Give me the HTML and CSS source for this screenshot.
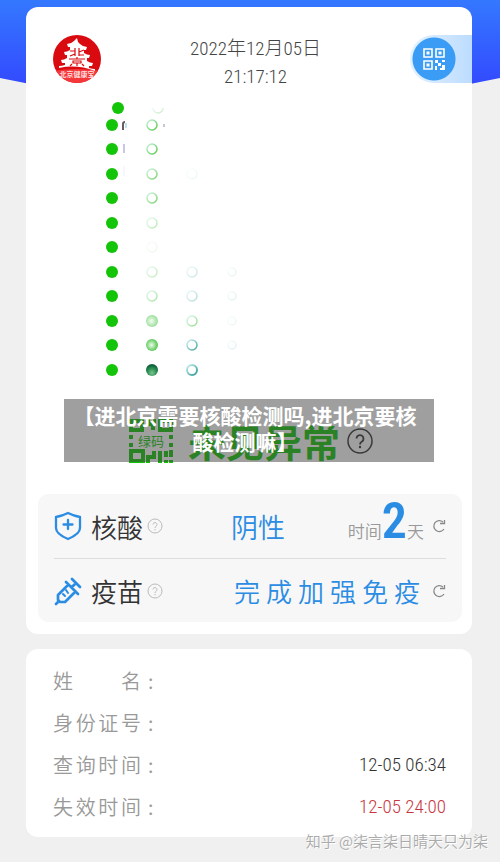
FILE: index.html
```
<!DOCTYPE html>
<html lang="zh-CN">

<head>
    <meta charset="UTF-8">
    <meta name="viewport" content="width=device-width, initial-scale=1.0">
    <title>北京健康宝</title>
    <link rel="stylesheet" href="styles.css">
</head>

<body>
    <div class="sky"></div>
    <main class="page">
        <section class="card">
            <header class="top">
                <svg class="logo" viewBox="0 0 48 48" role="img" aria-label="北京健康宝">
                    <defs>
                        <clipPath id="round"><circle cx="24" cy="24" r="24" /></clipPath>
                    </defs>
                    <g clip-path="url(#round)">
                        <rect width="48" height="48" fill="#d90b10" />
                        <path d="M0 36Q24 32 48 36V48H0Z" fill="#f4373a" />
                    </g>
                    <path d="M24 3l1 4 2 2q3 3 7 3l-1 3h-2v3q3 2 6 2l-1 3h-2v3q3 2 6 2l-1 3h-3v2q3 1 6 1v2Q24 29 6 33v-2q3 0 6-1v-2H9l-1-3q3 0 6-2v-3h-2l-1-3q3 0 6-2v-3h-2l-1-3q4 0 7-3l2-2z" fill="#fff" />
                    <path d="M22 13v8M22 16h-5M22 19l-5 2M26 13v8M31 15l-5 2M26 20h5M24 22v2M16 24h16M20 26h8v2h-8zM24 28v3M19 29l-2 2M29 29l2 2" fill="none" stroke="#d90b10" stroke-width="1.200" />
                    <text x="24" y="42" text-anchor="middle" class="logo-text">北京健康宝</text>
                </svg>
                <div class="clock">
                    <div>2022年12月05日</div>
                    <div>21:17:12</div>
                </div>
                <button class="scan" type="button" aria-label="扫码">
                    <svg viewBox="0 0 22 22">
                        <g fill="none" stroke="#fff" stroke-width="1.600">
                            <path d="M1 1h8v8H1zM13 1h8v8h-8zM1 13h8v8H1z" />
                        </g>
                        <path d="M3.500 3.500h3v3h-3zM15.500 3.500h3v3h-3zM3.500 15.500h3v3h-3zM12 12h3v3h-3zM15 15h3v3h-3zM19 12h3v2h-3zM12 18h2v4h-2zM19 17h3v5h-5v-2h2z" fill="#fff" />
                    </svg>
                </button>
            </header>

            <svg class="dots" viewBox="0 0 260 282" aria-hidden="true">
                <defs>
                    <linearGradient id="ring" x1="0" y1="0" x2="1" y2="1">
                        <stop offset="0" stop-color="#c8f2df" />
                        <stop offset="1" stop-color="#52c945" />
                    </linearGradient>
                    <linearGradient id="ring2" x1="0" y1="0" x2="1" y2="1">
                        <stop offset="0" stop-color="#c8eef2" />
                        <stop offset="1" stop-color="#2b9a91" />
                    </linearGradient>
                    <radialGradient id="ball" cx=".5" cy=".75" r=".7">
                        <stop offset="0" stop-color="#7cc592" />
                        <stop offset=".6" stop-color="#258a4d" />
                        <stop offset="1" stop-color="#0c5a38" />
                    </radialGradient>
                    <radialGradient id="glow" cx=".45" cy=".5" r=".5">
                        <stop offset="0" stop-color="#eefce8" />
                        <stop offset="1" stop-color="#5cc95c" />
                    </radialGradient>
                </defs>
                <g fill="#14c408">
                    <circle cx="14" cy="14" r="6" />
                    <circle cx="8" cy="31" r="6" />
                    <circle cx="8" cy="55" r="6" />
                    <circle cx="8" cy="80" r="6" />
                    <circle cx="8" cy="104" r="6" />
                    <circle cx="8" cy="129" r="6" />
                    <circle cx="8" cy="153" r="6" />
                    <circle cx="8" cy="178" r="6" />
                    <circle cx="8" cy="202" r="6" />
                    <circle cx="8" cy="227" r="6" />
                    <circle cx="8" cy="251" r="6" />
                    <circle cx="8" cy="276" r="6" />
                </g>
                <path d="M19 36V30q0-2 2-2" fill="none" stroke="#6b5a60" stroke-width="2" />
                <path d="M22 34v-5" stroke="#bfe3ea" stroke-width="2" />
                <path d="M60 33v-3" stroke="#8a8ea8" />
                <path d="M20 59v-9" stroke="#c9c6e6" stroke-width="2" />
                <path d="M20 82v-10" stroke="#eeeefa" />
                <g fill="none" stroke="url(#ring)" stroke-width="1.500">
                    <path d="M49 14a5 5 0 0 0 10 0" opacity=".3" />
                    <circle cx="48" cy="31" r="5" />
                    <circle cx="48" cy="55" r="5" />
                    <circle cx="48" cy="80" r="5" opacity=".8" />
                    <circle cx="48" cy="104" r="5" opacity=".8" />
                    <circle cx="48" cy="129" r="5" opacity=".4" />
                    <circle cx="48" cy="153" r="5" opacity=".1" />
                    <circle cx="48" cy="178" r="5" opacity=".35" />
                    <circle cx="48" cy="202" r="5" opacity=".5" />
                </g>
                <circle cx="48" cy="227" r="6" fill="url(#glow)" opacity=".6" />
                <circle cx="48" cy="251" r="6" fill="url(#glow)" />
                <circle cx="48" cy="276" r="6" fill="url(#ball)" />
                <g fill="none" stroke="url(#ring2)" stroke-width="1.500">
                    <circle cx="88" cy="80" r="5" opacity=".08" />
                    <circle cx="88" cy="178" r="5" opacity=".25" />
                    <circle cx="88" cy="202" r="5" opacity=".35" />
                    <circle cx="88" cy="227" r="5" opacity=".6" stroke="url(#ring)" />
                    <circle cx="88" cy="251" r="5" opacity=".9" />
                    <circle cx="88" cy="276" r="5" stroke-width="2" />
                    <circle cx="128" cy="178" r="4" opacity=".12" />
                    <circle cx="128" cy="202" r="4" opacity=".15" />
                    <circle cx="128" cy="227" r="4" opacity=".1" />
                    <circle cx="128" cy="251" r="4" opacity=".15" />
                </g>
            </svg>

            <div class="result">
                <div class="state">
                    <svg class="code" viewBox="0 0 46 46">
                        <path d="M3 3h11v9H3zM32 3h11v9H32zM3 33h12v10H3zM20 1v5h5v6M20 45v-6h6v-6M32 33v12M38 33v6M43 32v7M38 45v-3M43 45v-3" fill="none" stroke="#14c408" stroke-width="4" />
                        <path d="M1 17h4v4H1zM1 25h4v4H1zM41 17h4v4h-4zM41 25h4v4h-4zM25 1h3v4h-3z" fill="#14c408" />
                        <text x="23" y="28" text-anchor="middle" class="code-text">绿码</text>
                    </svg>
                    <strong>未见异常</strong>
                    <svg class="ask" viewBox="0 0 26 26">
                        <circle cx="13" cy="13" r="12" fill="none" stroke="#333" stroke-width="1.500" />
                        <path d="M9.500 10.500a3.500 3.500 0 1 1 5.500 3q-2 1-2 3" fill="none" stroke="#333" stroke-width="1.800" />
                        <circle cx="13" cy="19" r="1.200" fill="#333" />
                    </svg>
                </div>
                <h1 class="banner">【进北京需要核酸检测吗,进北京要核酸检测嘛】</h1>
            </div>

            <div class="panel">
                <div class="row">
                    <svg class="icon" viewBox="0 0 28 30">
                        <path d="M14 2q6 3 12 4v11q0 6-12 11Q2 23 2 17V6q6-1 12-4zM14 9v9M9.500 13.500h9" fill="none" stroke="#2b8ce3" stroke-width="2.300" stroke-linejoin="round" stroke-linecap="round" />
                    </svg>
                    <span class="name">核酸</span>
                    <svg class="help" viewBox="0 0 16 16">
                        <circle cx="8" cy="8" r="7" />
                        <path d="M6 6.500a2 2 0 1 1 3 1.800q-1 .500-1 1.700M8 11v1.300" />
                    </svg>
                    <span class="value negative">阴性</span>
                    <span class="days">时间<b>2</b>天</span>
                    <button class="reload" type="button" aria-label="刷新">
                        <svg viewBox="0 0 14 14">
                            <path d="M11 3A5.500 5.500 0 1 0 12 10M8 4.500h4.500V1" />
                        </svg>
                    </button>
                </div>
                <div class="row">
                    <svg class="icon" viewBox="0 0 28 30">
                        <g fill="none" stroke="#2b8ce3" stroke-width="2.700" stroke-linecap="round" stroke-linejoin="round">
                            <path d="M12 6l12 12M14 9L4 19v5l2 2h5l10-10M2 28l3-3M18 11l4-4M18 3l8 8" />
                            <path d="M12 14l2 3M9 18l2 2" stroke-width="2" />
                        </g>
                    </svg>
                    <span class="name">疫苗</span>
                    <svg class="help" viewBox="0 0 16 16">
                        <circle cx="8" cy="8" r="7" />
                        <path d="M6 6.500a2 2 0 1 1 3 1.800q-1 .500-1 1.700M8 11v1.300" />
                    </svg>
                    <span class="value booster">完成加强免疫</span>
                    <button class="reload" type="button" aria-label="刷新">
                        <svg viewBox="0 0 14 14">
                            <path d="M11 3A5.500 5.500 0 1 0 12 10M8 4.500h4.500V1" />
                        </svg>
                    </button>
                </div>
            </div>
        </section>

        <dl class="card info">
            <div class="line">
                <dt><span>姓名</span>:</dt>
                <dd></dd>
            </div>
            <div class="line">
                <dt><span>身份证号</span>:</dt>
                <dd></dd>
            </div>
            <div class="line">
                <dt><span>查询时间</span>:</dt>
                <dd>12-05 06:34</dd>
            </div>
            <div class="line">
                <dt><span>失效时间</span>:</dt>
                <dd class="expired">12-05 24:00</dd>
            </div>
        </dl>
        <div class="watermark">知乎 @柒言柒日晴天只为柒</div>
    </main>
</body>

</html>
```
FILE: styles.css
```
* {
    box-sizing: border-box;
}

body {
    margin: 0;
    background-color: #f0f0f0;
    font-family: "Noto Sans CJK SC", sans-serif;
    font-weight: 350;
    color: #333;
}

.sky {
    position: absolute;
    top: 0;
    left: 0;
    width: 100%;
    height: 96px;
    background: linear-gradient(#3478ff, #3344ff);
    clip-path: polygon(0 0, 100% 0, 100% 78px, 90% 88px, 10% 88px, 0 78px);
}

.page {
    position: relative;
    padding: 7px 28px 25px 26px;
}

.card {
    background-color: white;
    border-radius: 12px;
}

.top {
    display: flex;
    justify-content: space-between;
    padding: 28px 0 0 27px;
}

.logo {
    width: 48px;
    height: 48px;
}

.logo-text {
    font-size: 7px;
    font-weight: bold;
    fill: #ffdcdc;
}

.clock {
    height: 48px;
    font-family: "Roboto Condensed", Roboto, "Noto Sans CJK SC", sans-serif;
    font-size: 19px;
    font-weight: 300;
    line-height: 28px;
    text-align: center;
    color: #444;
}

.scan {
    display: flex;
    align-items: center;
    justify-content: center;
    width: 62px;
    height: 48px;
    padding: 0 14px 0 0;
    border: 0;
    border-radius: 24px 0 0 24px;
    background: radial-gradient(circle at 24px 24px, #3a9cf5 21px, transparent 22px), linear-gradient(to right, #e4f2ff, #bcdcff);
}

.scan svg {
    width: 22px;
    height: 22px;
}

.dots {
    display: block;
    width: 260px;
    height: 282px;
    margin: 11px 0 0 78px;
}

.result {
    position: relative;
    margin: 23px 38px 0;
    height: 63px;
}

.state {
    display: flex;
    align-items: center;
    padding: 19px 0 0 64px;
}

.code {
    width: 46px;
    height: 46px;
    margin-right: 14px;
}

.code-text {
    font-size: 13px;
    font-weight: 400;
    fill: #14c408;
}

.state strong {
    font-size: 38px;
    font-weight: bold;
    line-height: 46px;
    color: #14c408;
}

.ask {
    width: 26px;
    height: 26px;
    margin-left: 7px;
}

.banner {
    position: absolute;
    top: 0;
    left: 0;
    width: 100%;
    height: 63px;
    margin: 0;
    padding: 3px 16px 3px 8px;
    background-color: rgba(64, 64, 64, 0.5);
    font-size: 21px;
    line-height: 26px;
    font-weight: bold;
    text-align: center;
    color: white;
}

.panel {
    margin: 32px 10px 0 12px;
    padding: 0 16px;
    border-radius: 10px;
    background-color: #f7f7f7;
}

.card:first-child {
    padding-bottom: 12px;
}

.row {
    display: flex;
    align-items: center;
    height: 64px;
}

.row + .row {
    border-top: 1px solid #ddd;
}

.icon {
    width: 28px;
    height: 30px;
    margin-right: 9px;
}

.name {
    font-size: 26px;
}

.help {
    width: 16px;
    height: 16px;
    margin-left: 4px;
    fill: none;
    stroke: #bbb;
}

.value {
    font-size: 27px;
    color: #2b8ce3;
}

.negative {
    margin-left: 68px;
}

.booster {
    width: 186px;
    margin-left: auto;
    font-size: 26px;
    text-align: justify;
    text-align-last: justify;
}

.days {
    display: flex;
    align-items: baseline;
    margin-left: auto;
    font-size: 17px;
    line-height: 58px;
    color: #999;
}

.days b {
    font-family: "Roboto Condensed", Roboto, sans-serif;
    font-size: 50px;
    font-weight: 600;
    color: #2b8ce3;
}

.reload {
    width: 14px;
    height: 14px;
    margin-left: 8px;
    padding: 0;
    border: 0;
    background: none;
}

.booster + .reload {
    margin-left: 12px;
}

.reload svg {
    display: block;
    fill: none;
    stroke: #888;
    stroke-width: 1.3;
}

.info {
    margin: 15px 0 0;
    padding: 11px 26px 9px 27px;
}

.line {
    display: flex;
    justify-content: space-between;
    line-height: 42px;
    font-size: 20px;
}

dt {
    display: flex;
    gap: 7px;
    color: #999;
}

dt span {
    width: 88px;
    text-align: justify;
    text-align-last: justify;
}

dd {
    margin: 0;
    font-family: "Roboto Condensed", Roboto, sans-serif;
    font-size: 19px;
    font-weight: 300;
}

.expired {
    color: #c9353f;
}

.watermark {
    position: absolute;
    right: 12px;
    bottom: 10px;
    font-size: 15px;
    line-height: 22px;
    color: #aaa;
    text-shadow: 1px 1px 0 white;
}
```
